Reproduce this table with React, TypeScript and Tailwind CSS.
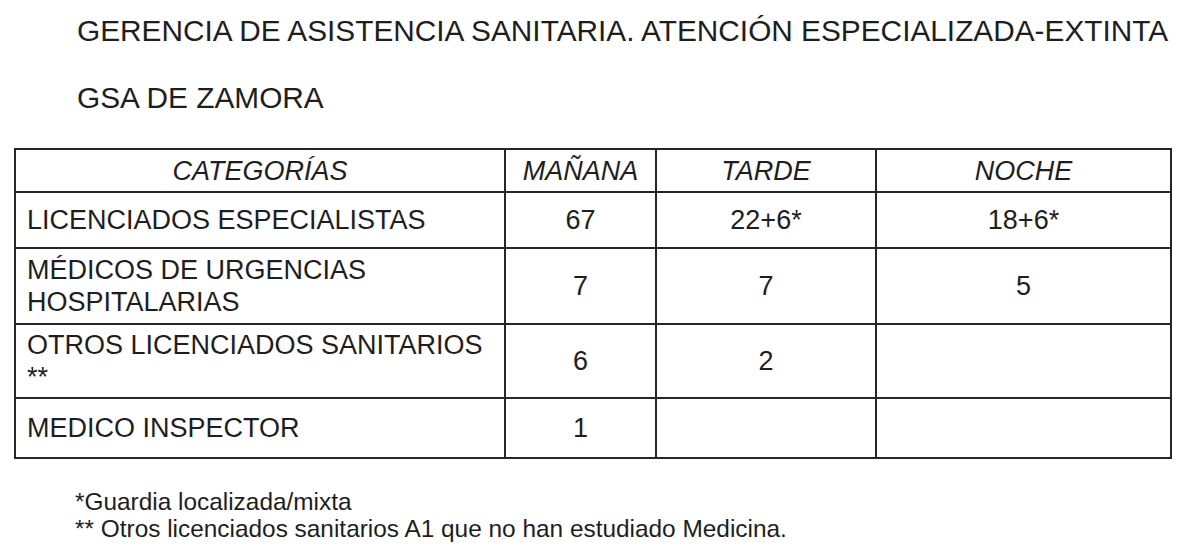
import React from "react";

const rows: { cat: string[]; m: string; t: string; n: string; h: string }[] = [
  { cat: ["LICENCIADOS ESPECIALISTAS"], m: "67", t: "22+6*", n: "18+6*", h: "h-[56px]" },
  { cat: ["MÉDICOS DE URGENCIAS", "HOSPITALARIAS"], m: "7", t: "7", n: "5", h: "h-[76px]" },
  { cat: ["OTROS LICENCIADOS SANITARIOS", "**"], m: "6", t: "2", n: "", h: "h-[74px]" },
  { cat: ["MEDICO INSPECTOR"], m: "1", t: "", n: "", h: "h-[60px]" },
];

export default function App() {
  return (
    <div className="w-[1200px] h-[558px] bg-white text-[#1e1e1e] overflow-hidden" style={{ fontFamily: '"Liberation Sans", Arial, sans-serif' }}>
      <div className="pl-[77px] pt-[14px] text-[29.8px] leading-[34px] whitespace-nowrap">
        GERENCIA DE ASISTENCIA SANITARIA. ATENCIÓN ESPECIALIZADA-EXTINTA
      </div>
      <div className="pl-[77px] pt-[33px] text-[29.8px] leading-[34px]">GSA DE ZAMORA</div>
      <div className="pl-[14px] pt-[33px]">
        <table className="border-collapse text-[27px] leading-[32px]">
          <colgroup>
            <col className="w-[490px]" />
            <col className="w-[151px]" />
            <col className="w-[220px]" />
            <col className="w-[295px]" />
          </colgroup>
          <thead>
            <tr className="h-[43px] italic">
              <th className="border-2 border-[#262626] font-normal text-center p-0">CATEGORÍAS</th>
              <th className="border-2 border-[#262626] font-normal text-center p-0">MAÑANA</th>
              <th className="border-2 border-[#262626] font-normal text-center p-0">TARDE</th>
              <th className="border-2 border-[#262626] font-normal text-center p-0">NOCHE</th>
            </tr>
          </thead>
          <tbody>
            {rows.map((r, i) => (
              <tr key={i} className={r.h}>
                <td className="border-2 border-[#262626] pl-[11px] pr-2 py-0 align-middle whitespace-nowrap">
                  {r.cat.map((c, j) => (
                    <div key={j}>{c}</div>
                  ))}
                </td>
                <td className="border-2 border-[#262626] text-center p-0 align-middle">{r.m}</td>
                <td className="border-2 border-[#262626] text-center p-0 align-middle">{r.t}</td>
                <td className="border-2 border-[#262626] text-center p-0 align-middle">{r.n}</td>
              </tr>
            ))}
          </tbody>
        </table>
      </div>
      <div className="pl-[75px] pt-[29px] text-[24.4px] leading-[27px] whitespace-nowrap">
        <div>*Guardia localizada/mixta</div>
        <div>** Otros licenciados sanitarios A1 que no han estudiado Medicina.</div>
      </div>
    </div>
  );
}
